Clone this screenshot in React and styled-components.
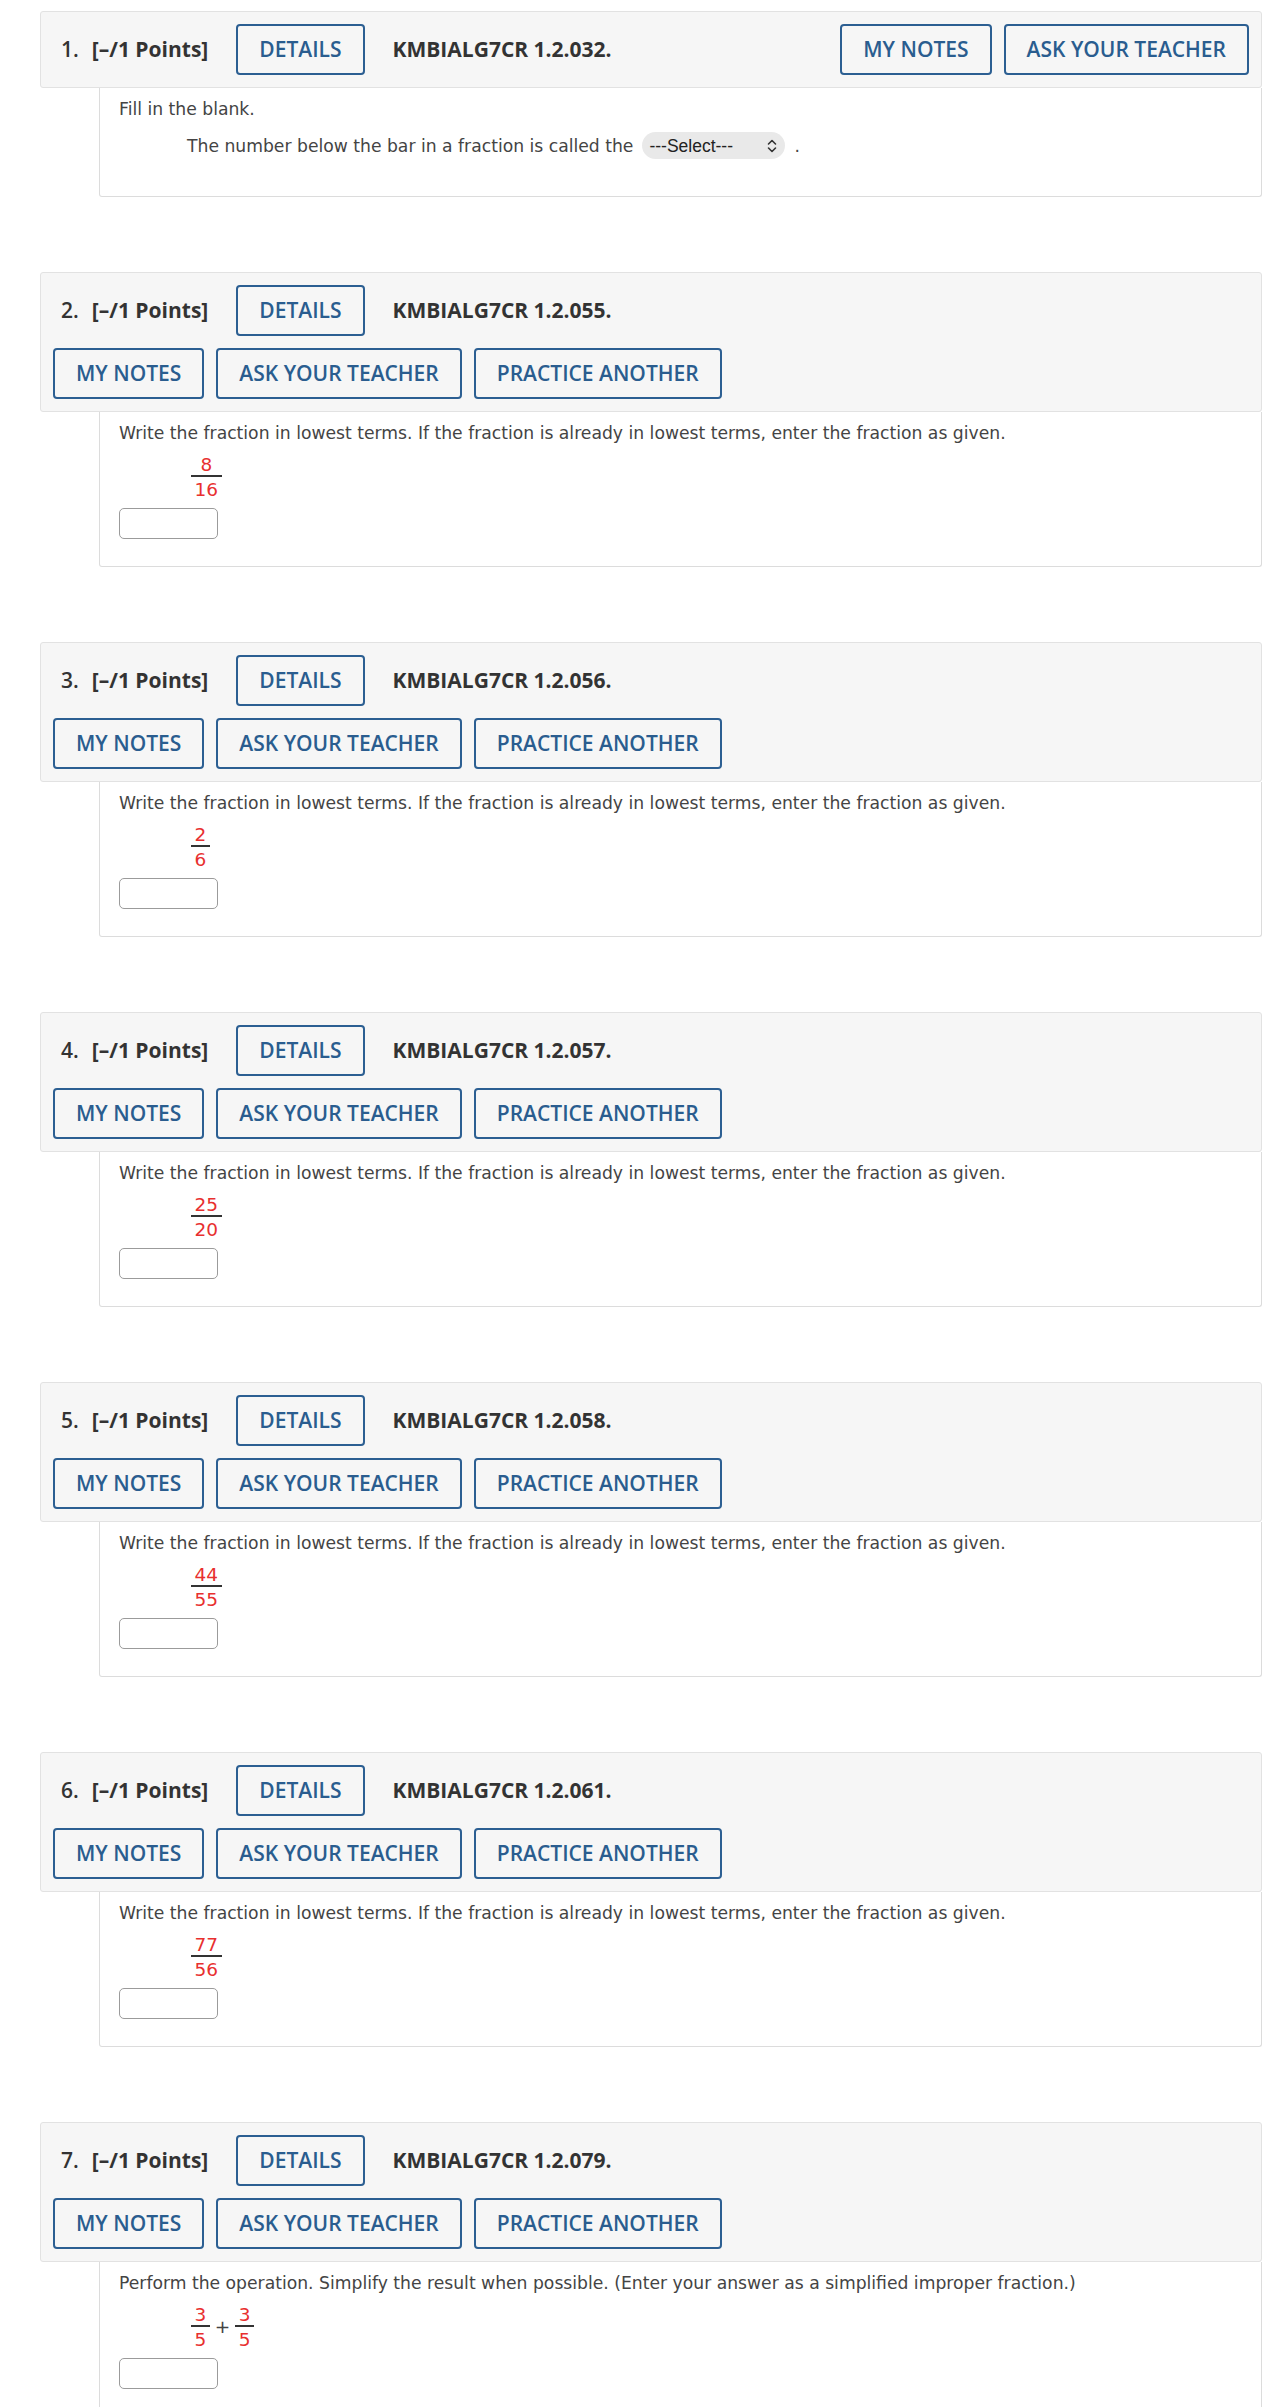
import React from 'react';
import styled, { createGlobalStyle } from 'styled-components';

const GlobalStyle = createGlobalStyle`
  html, body { margin: 0; padding: 0; background: #ffffff; }
  body { font-family: "DejaVu Sans", Verdana, sans-serif; }
  *, *::before, *::after { box-sizing: border-box; }
`;

const Page = styled.main`
  display: flex;
  flex-direction: column;
  gap: 75px;
  padding: 11px 22px 40px 40px;
`;

const Question = styled.section`
  display: flex;
  flex-direction: column;
`;

const Header = styled.header`
  display: flex;
  flex-wrap: wrap;
  justify-content: space-between;
  align-items: center;
  gap: 12px;
  padding: 12px;
  background: #f6f6f6;
  border: 1px solid #e2e2e2;
  border-radius: 3px;
  font-family: "Open Sans", "Liberation Sans", sans-serif;
  color: #333333;
`;

const TitleGroup = styled.div`
  display: flex;
  align-items: center;
  gap: 28px;
`;

const Title = styled.h2`
  margin: 0 0 0 8px;
  display: flex;
  align-items: baseline;
  gap: 13px;
  font-size: 21px;
  font-weight: 700;
  line-height: 1.2;
`;

const Num = styled.span`
  font-weight: 600;
`;

const Code = styled.span`
  font-size: 21px;
  font-weight: 700;
  line-height: 1.2;
`;

const Actions = styled.div`
  display: flex;
  gap: 12px;
`;

const Btn = styled.button`
  height: 51px;
  padding: 0 21px;
  border: 2px solid #2c5f92;
  border-radius: 4px;
  background: transparent;
  color: #2a5d8f;
  font-family: "Open Sans", "Liberation Sans", sans-serif;
  font-size: 21px;
  font-weight: 600;
  line-height: 1;
  white-space: nowrap;
  cursor: pointer;
`;

const Body = styled.div`
  margin-left: 59px;
  border: 1px solid #dcdcdc;
  border-top: none;
  border-radius: 0 0 3px 3px;
  padding: 9px 19px ${(p) => p.$pb}px;
  color: #444444;
  font-size: 17.2px;
  line-height: 24px;
`;

const Prompt = styled.p`
  margin: 0;
`;

const BlankLine = styled.div`
  display: flex;
  align-items: center;
  min-height: 27px;
  margin: 11px 0 0 68px;
`;

const SelectWrap = styled.span`
  position: relative;
  display: inline-flex;
  margin-left: 9px;
`;

const Select = styled.select`
  appearance: none;
  -webkit-appearance: none;
  width: 143px;
  height: 27px;
  border: none;
  border-radius: 14px;
  background: #e9e9e9;
  padding: 0 0 0 7px;
  font-family: "Liberation Sans", Arial, sans-serif;
  font-size: 17.5px;
  color: #222222;
  outline: none;
`;

const Chevron = styled.svg`
  position: absolute;
  right: 7px;
  top: 50%;
  transform: translateY(-50%);
  pointer-events: none;
`;

const Dot = styled.span`
  margin-left: 9px;
`;

const MathRow = styled.div`
  display: flex;
  align-items: center;
  margin: 9px 0 0 72px;
`;

const Frac = styled.span`
  display: inline-flex;
  flex-direction: column;
  align-items: stretch;
  text-align: center;
  color: #e8302f;
  font-size: 18.5px;
  line-height: 21px;
`;

const Numer = styled.span`
  padding: 0 3.5px;
`;

const Denom = styled.span`
  padding: 2px 3.5px 0;
  border-top: 2px solid #333333;
`;

const Plus = styled.span`
  margin: 0 5px;
  color: #444444;
  font-size: 18.5px;
`;

const AnswerInput = styled.input`
  display: block;
  width: 99px;
  height: 31px;
  margin-top: 8px;
  border: 1px solid #9b9b9b;
  border-radius: 5px;
  background: #ffffff;
`;

const LOWEST =
  'Write the fraction in lowest terms. If the fraction is already in lowest terms, enter the fraction as given.';

const questions = [
  { n: 1, code: '1.2.032', kind: 'blank' },
  { n: 2, code: '1.2.055', practice: true, prompt: LOWEST, fracs: [[8, 16]] },
  { n: 3, code: '1.2.056', practice: true, prompt: LOWEST, fracs: [[2, 6]] },
  { n: 4, code: '1.2.057', practice: true, prompt: LOWEST, fracs: [[25, 20]] },
  { n: 5, code: '1.2.058', practice: true, prompt: LOWEST, fracs: [[44, 55]] },
  { n: 6, code: '1.2.061', practice: true, prompt: LOWEST, fracs: [[77, 56]] },
  {
    n: 7,
    code: '1.2.079',
    practice: true,
    prompt:
      'Perform the operation. Simplify the result when possible. (Enter your answer as a simplified improper fraction.)',
    fracs: [
      [3, 5],
      [3, 5],
    ],
  },
];

function Fraction({ top, bottom }) {
  return (
    <Frac>
      <Numer>{top}</Numer>
      <Denom>{bottom}</Denom>
    </Frac>
  );
}

function QuestionCard({ q }) {
  return (
    <Question>
      <Header>
        <TitleGroup>
          <Title>
            <Num>{q.n}.</Num>
            <span>[–/1 Points]</span>
          </Title>
          <Btn>DETAILS</Btn>
          <Code>KMBIALG7CR {q.code}.</Code>
        </TitleGroup>
        <Actions>
          <Btn>MY NOTES</Btn>
          <Btn>ASK YOUR TEACHER</Btn>
          {q.practice && <Btn>PRACTICE ANOTHER</Btn>}
        </Actions>
      </Header>
      {q.kind === 'blank' ? (
        <Body $pb={37}>
          <Prompt>Fill in the blank.</Prompt>
          <BlankLine>
            <span>The number below the bar in a fraction is called the</span>
            <SelectWrap>
              <Select defaultValue="">
                <option value="">---Select---</option>
                <option value="numerator">numerator</option>
                <option value="denominator">denominator</option>
              </Select>
              <Chevron width="12" height="16" viewBox="0 0 12 16" fill="none">
                <path
                  d="M2.5 6 L6 2.5 L9.5 6 M2.5 10 L6 13.5 L9.5 10"
                  stroke="#333"
                  strokeWidth="1.6"
                  strokeLinecap="round"
                  strokeLinejoin="round"
                />
              </Chevron>
            </SelectWrap>
            <Dot>.</Dot>
          </BlankLine>
        </Body>
      ) : (
        <Body $pb={27}>
          <Prompt>{q.prompt}</Prompt>
          <MathRow>
            {q.fracs.map((f, i) => (
              <React.Fragment key={i}>
                {i > 0 && <Plus>+</Plus>}
                <Fraction top={f[0]} bottom={f[1]} />
              </React.Fragment>
            ))}
          </MathRow>
          <AnswerInput type="text" aria-label={`Answer ${q.n}`} />
        </Body>
      )}
    </Question>
  );
}

export default function App() {
  return (
    <>
      <GlobalStyle />
      <Page>
        {questions.map((q) => (
          <QuestionCard key={q.n} q={q} />
        ))}
      </Page>
    </>
  );
}
